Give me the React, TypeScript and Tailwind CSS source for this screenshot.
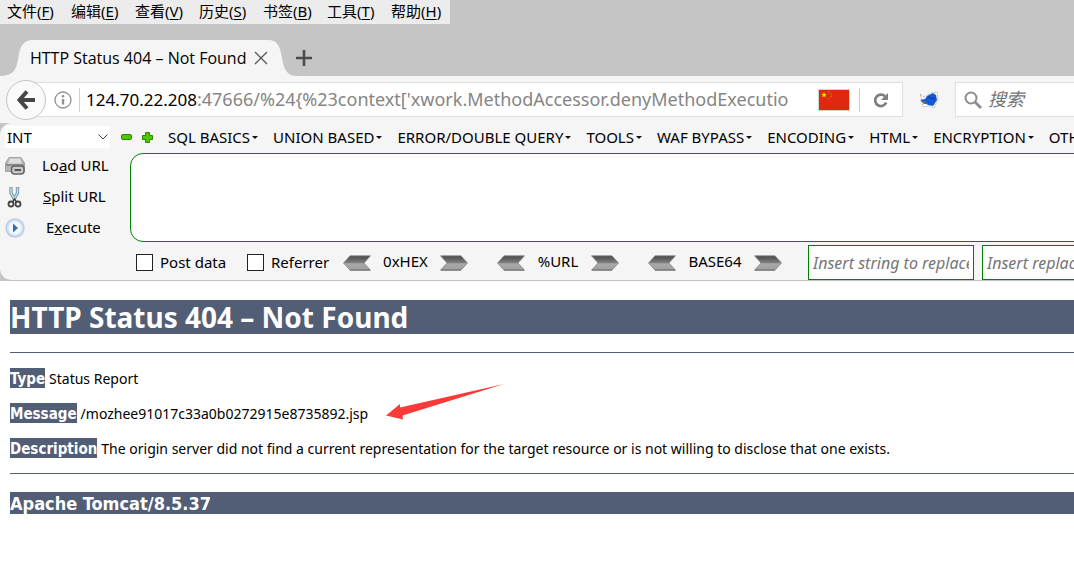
import React from "react";

const menus: [string, string][] = [
  ["文件", "F"],
  ["编辑", "E"],
  ["查看", "V"],
  ["历史", "S"],
  ["书签", "B"],
  ["工具", "T"],
  ["帮助", "H"],
];

const hackMenus = [
  "SQL BASICS",
  "UNION BASED",
  "ERROR/DOUBLE QUERY",
  "TOOLS",
  "WAF BYPASS",
  "ENCODING",
  "HTML",
  "ENCRYPTION",
  "OTHER",
];

function MenuBar() {
  return (
    <nav className="flex h-6 w-[450px] items-center bg-[#ececec] pb-px pl-[7px] text-[15px]">
      {menus.map(([label, key]) => (
        <button key={key} type="button" className="w-16 shrink-0 text-left whitespace-nowrap">
          {label}(<u className="underline-offset-2">{key}</u>)
        </button>
      ))}
    </nav>
  );
}

function TabStrip() {
  return (
    <div className="flex h-[52px] items-end">
      <svg className="h-9 w-[34px] shrink-0" viewBox="0 0 34 36" aria-hidden="true">
        <path d="M0 36C12 36 16 31 18 20C20 7 22 0 34 0V36Z" fill="#f5f5f5" />
      </svg>
      <div className="-ml-1 flex h-9 w-[238px] shrink-0 items-center justify-between bg-[#f5f5f5]">
        <span className="font-['Open_Sans',sans-serif] text-[16px] whitespace-nowrap">HTTP Status 404 – Not Found</span>
        <button type="button" aria-label="Close tab">
          <svg width="14" height="14" viewBox="0 0 14 14" stroke="#555" strokeWidth="1.3">
            <path d="M1 1L13 13M13 1L1 13" />
          </svg>
        </button>
      </div>
      <svg className="h-9 w-[30px] shrink-0" viewBox="0 0 30 36" aria-hidden="true">
        <path d="M0 0C10 0 12 7 14 18C16 30 19 36 30 36H0Z" fill="#f5f5f5" />
      </svg>
      <button type="button" aria-label="New tab" className="mb-2.5 -ml-1 h-4 w-5">
        <svg className="mx-auto" width="16" height="16" viewBox="0 0 16 16" stroke="#4c4c4c" strokeWidth="2.6">
          <path d="M8 0V16M0 8H16" />
        </svg>
      </button>
    </div>
  );
}

function Flag() {
  return (
    <svg className="shrink-0" width="32" height="22" viewBox="0 0 32 22" aria-hidden="true">
      <rect x=".5" y=".5" width="31" height="21" fill="#de2910" stroke="#d9cfcf" />
      <path d="M6 3l.8 2 2 .1-1.600 1.300.6 2.100L6 7.300l-1.800 1.200.6-2.100L3.200 5.100l2-.1z" fill="#ffde00" />
      <g fill="#e0701a">
        <circle cx="10.500" cy="3" r=".8" />
        <circle cx="13" cy="5" r=".8" />
        <circle cx="13" cy="7.500" r=".8" />
        <circle cx="10.500" cy="9.500" r=".8" />
      </g>
    </svg>
  );
}

function NavBar() {
  return (
    <div className="flex h-[47px] items-center bg-[#f5f5f5] pl-[6px]">
      <button
        type="button"
        aria-label="Back"
        className="z-10 flex size-10 shrink-0 items-center justify-center rounded-full border border-[#c4c4c4] bg-[#fafafa]"
      >
        <svg width="20" height="20" viewBox="0 0 20 20" fill="none" stroke="#454545" strokeWidth="4">
          <path d="M11 1.500L3.500 10L11 18.500M4 10H19" />
        </svg>
      </button>
      <div className="-ml-5 flex h-[35px] min-w-0 flex-1 items-center border border-[#dfdfdf] bg-white pl-[27px]">
        <svg className="shrink-0" width="18" height="18" viewBox="0 0 18 18" fill="none" stroke="#919191" aria-hidden="true">
          <circle cx="9" cy="9" r="8" strokeWidth="1.300" />
          <path d="M9 8V13.500" strokeWidth="2.400" />
          <circle cx="9" cy="5.200" r="1.300" fill="#919191" stroke="none" />
        </svg>
        <span className="ml-[7px] h-6 w-px shrink-0 bg-[#d0d0d0]" />
        <div className="ml-[6px] min-w-0 flex-1 overflow-hidden text-[18px] whitespace-nowrap text-[#858585]">
          <span className="text-[17px] text-black">124.70.22.208</span>
          :47666/%24&#123;%23context['xwork.MethodAccessor.denyMethodExecution
        </div>
        <span className="ml-[30px] flex">
          <Flag />
        </span>
        <span className="ml-[9px] h-6 w-px shrink-0 bg-[#d0d0d0]" />
        <button type="button" aria-label="Reload" className="mr-[13px] ml-[13px]">
          <svg width="16" height="16" viewBox="0 0 16 16" fill="none" aria-hidden="true">
            <path d="M12 4.300A5.700 5.700 0 1 0 13.200 10.500" stroke="#7e7e7e" strokeWidth="2.700" />
            <path d="M15 1V8H8Z" fill="#7e7e7e" />
          </svg>
        </button>
      </div>
      <button type="button" aria-label="Add-on" className="mx-4 shrink-0">
        <svg width="20" height="18" viewBox="0 0 20 18" aria-hidden="true">
          <path d="M5 6L1 3L3 9L4 16L10 15L15 17L19 8L18 1L13 2Z" fill="#fdfdfd" stroke="#a5a5a5" strokeWidth=".8" strokeDasharray="2 1" />
          <path d="M8 5L14 2L17 4L18 9L14 15L9 14L4 11L1 9L6 8Z" fill="#1358d8" />
          <path d="M2 10L6 10L9 13L5 13Z" fill="#5f6878" />
          <path d="M9 5.500L13 8L17 6.500" stroke="#0a379a" fill="none" />
        </svg>
      </button>
      <label className="flex h-[35px] w-[119px] shrink-0 items-center border border-r-0 border-[#dfdfdf] bg-white pl-2">
        <svg className="shrink-0" width="18" height="18" viewBox="0 0 18 18" fill="none" stroke="#8d8d8d" aria-hidden="true">
          <circle cx="7" cy="7" r="5.500" strokeWidth="2" />
          <path d="M11 11L17 17" strokeWidth="2.800" />
        </svg>
        <input
          aria-label="搜索"
          placeholder="搜索"
          className="ml-[6px] w-full min-w-0 bg-transparent text-[18px] italic outline-none placeholder:text-[#757575]"
        />
      </label>
    </div>
  );
}

function LoadIcon() {
  return (
    <svg width="20" height="20" viewBox="0 0 20 20" aria-hidden="true">
      <path d="M4 1.500H16L19.500 7V15.500H.5V7Z" fill="#b4b4b4" stroke="#a2a2a2" />
      <path d="M5 2.500H15L17 7.500H3Z" fill="#dedede" />
      <path d="M1 8H19V10H1Z" fill="#8d8d8d" />
      <rect x="6.500" y="10" width="12.500" height="8" rx="3" fill="#c9c9c9" stroke="#666" strokeWidth="1.500" />
      <path d="M9.500 14H16" stroke="#555" strokeWidth="2" />
    </svg>
  );
}

function SplitIcon() {
  return (
    <svg width="20" height="22" viewBox="0 0 20 22" fill="none" aria-hidden="true">
      <path d="M6 1V7L10 14M12.500 1V7L8.500 14" stroke="#7c9aa8" strokeWidth="3.400" />
      <path d="M6 1.500V7L9.500 13M12.500 1.500V7L9 13" stroke="#c0dcea" strokeWidth="1.400" />
      <circle cx="6" cy="18" r="2.500" stroke="#444" strokeWidth="1.800" />
      <circle cx="13" cy="18" r="2.500" stroke="#444" strokeWidth="1.800" />
      <path d="M7.500 16L9.500 13L11.500 16" stroke="#444" strokeWidth="1.500" />
    </svg>
  );
}

function ExecuteIcon() {
  return (
    <svg width="20" height="20" viewBox="0 0 20 20" aria-hidden="true">
      <circle cx="10" cy="10" r="9" fill="#d3e2f4" stroke="#bccde4" strokeWidth="1.500" />
      <circle cx="10" cy="10" r="6.500" fill="#f4f9ff" />
      <path d="M8 5.500L13 10L8 14.500Z" fill="#2f6fc0" />
    </svg>
  );
}

function Arrow({ label, flip = false }: { label: string; flip?: boolean }) {
  return (
    <button type="button" aria-label={label} className={flip ? "shrink-0 -scale-x-100" : "shrink-0"}>
      <svg width="28" height="16" viewBox="0 0 28 16" aria-hidden="true">
        <defs>
          <linearGradient id="metal" x1="0" y1="0" x2="0" y2="1">
            <stop offset="0" stopColor="#484848" />
            <stop offset=".47" stopColor="#7d7d7d" />
            <stop offset=".55" stopColor="#a8a8a8" />
            <stop offset="1" stopColor="#a0a0a0" />
          </linearGradient>
        </defs>
        <path d="M.5 8L7 .8H27.500L21 8L27.500 15.200H7Z" fill="url(#metal)" stroke="#8a8a8a" strokeWidth=".8" />
        <path d="M7 15H27" stroke="#6d6d6d" />
      </svg>
    </button>
  );
}

function Codec({ name, className }: { name: string; className: string }) {
  return (
    <div className={`flex shrink-0 items-center justify-between ${className}`}>
      <Arrow label={`Decode ${name}`} />
      <span className="pb-0.5">{name}</span>
      <Arrow label={`Encode ${name}`} flip />
    </div>
  );
}

function HackBar() {
  return (
    <div className="bg-[#c5c5c5]">
      <div className="overflow-hidden rounded-l-xl border-b border-[#c0c0c0] bg-[#f5f5f5] text-[15px]">
        <div className="flex h-[30px] items-center pb-0.5">
          <div className="relative ml-[5px] h-[22px] w-[105px] shrink-0 bg-white">
            <select aria-label="Type" className="h-full w-full appearance-none pl-0.5 outline-none">
              <option>INT</option>
            </select>
            <svg className="pointer-events-none absolute top-2 right-0.5" width="10" height="6" viewBox="0 0 10 6" fill="none" stroke="#444">
              <path d="M.5 .5L5 5L9.500 .5" />
            </svg>
          </div>
          <button type="button" aria-label="Remove" className="ml-[11px] shrink-0">
            <svg width="11" height="6" viewBox="0 0 11 6">
              <rect x=".5" y=".5" width="10" height="5" rx="1.500" fill="#4cc800" stroke="#2c8400" />
            </svg>
          </button>
          <button type="button" aria-label="Add" className="mr-[15px] ml-[10px] shrink-0">
            <svg width="11" height="11" viewBox="0 0 11 11">
              <path d="M3.500 .5H7.500V3.500H10.500V7.500H7.500V10.500H3.500V7.500H.5V3.500H3.500Z" fill="#4cc800" stroke="#2c8400" />
            </svg>
          </button>
          <div className="flex gap-[15px]">
            {hackMenus.map((m) => (
              <button key={m} type="button" className="flex shrink-0 items-center whitespace-nowrap">
                {m}
                <svg className="ml-0.5" width="6" height="3" viewBox="0 0 6 3" aria-hidden="true">
                  <path d="M0 0H6L3 3Z" fill="#111" />
                </svg>
              </button>
            ))}
          </div>
        </div>
        <div className="flex">
          <div className="-mt-[3px] w-[130px] shrink-0 pl-[5px]">
            <button type="button" className="flex h-[31px] w-full items-center">
              <LoadIcon />
              <span className="ml-[17px]">Lo<u>a</u>d URL</span>
            </button>
            <button type="button" className="flex h-[31px] w-full items-center">
              <SplitIcon />
              <span className="ml-[18px]"><u>S</u>plit URL</span>
            </button>
            <button type="button" className="flex h-[31px] w-full items-center">
              <ExecuteIcon />
              <span className="ml-[21px]">E<u>x</u>ecute</span>
            </button>
          </div>
          <div className="min-w-0 flex-1">
            <textarea
              aria-label="URL"
              className="block h-[89px] w-[calc(100%+20px)] resize-none rounded-[13px] border border-[#008000] bg-white outline-none"
            />
            <div className="flex h-[38px] items-center pt-[3px] pl-[6px]">
              <label className="flex w-[111px] shrink-0 items-center gap-[7px] whitespace-nowrap">
                <input type="checkbox" className="size-[17px] appearance-none border border-[#222] bg-white" />
                Post data
              </label>
              <label className="flex w-24 shrink-0 items-center gap-[7px] whitespace-nowrap">
                <input type="checkbox" className="size-[17px] appearance-none border border-[#222] bg-white" />
                Referrer
              </label>
              <Codec name="0xHEX" className="w-[125px]" />
              <Codec name="%URL" className="ml-[29px] w-[122px]" />
              <Codec name="BASE64" className="ml-[29px] w-[134px]" />
              <input
                aria-label="Insert string to replace"
                placeholder="Insert string to replace"
                className="ml-[26px] h-[35px] w-[166px] shrink-0 border border-[#008000] bg-white px-1 text-[16px] italic outline-none placeholder:text-[#757575]"
              />
              <input
                aria-label="Insert replacing string"
                placeholder="Insert replacing string"
                className="ml-2 h-[35px] w-[166px] shrink-0 border border-[#008000] bg-white px-1 text-[16px] italic outline-none placeholder:text-[#757575]"
              />
            </div>
          </div>
        </div>
      </div>
    </div>
  );
}

function Row({ name, children }: { name: string; children: React.ReactNode }) {
  return (
    <p className="mb-[15px] flex h-5 items-center gap-1 whitespace-nowrap">
      <b className="h-5 bg-[#525d76] font-['DejaVu_Sans_Condensed',sans-serif] text-[15px] leading-[22px] text-white">{name}</b>
      <span>{children}</span>
    </p>
  );
}

function ErrorPage() {
  return (
    <main className="pt-[19px] pl-[10px] text-[14px]">
      <h1 className="h-[34px] bg-[#525d76] text-[28px] leading-[35px] font-bold whitespace-nowrap text-white">
        HTTP Status 404 – Not Found
      </h1>
      <hr className="mt-[18px] mb-[15px] border-[#525d76]" />
      <Row name="Type">Status Report</Row>
      <Row name="Message">
        <span className="flex items-center">
          /mozhee91017c33a0b0272915e8735892.jsp
          <svg className="-my-6 ml-[18px] h-[60px]" width="120" height="60" viewBox="0 0 120 60" aria-hidden="true">
            <path d="M0 32.500L14 21V24.500L118 1L16.500 32.500L17 36.500Z" fill="#fb3a38" />
          </svg>
        </span>
      </Row>
      <Row name="Description">
        The origin server did not find a current representation for the target resource or is not willing to disclose that one exists.
      </Row>
      <hr className="mb-[18px] border-[#525d76]" />
      <h3 className="h-[22px] bg-[#525d76] font-['DejaVu_Sans_Condensed',sans-serif] text-[18px] leading-[23px] font-bold text-white">
        Apache Tomcat/8.5.37
      </h3>
    </main>
  );
}

export default function App() {
  return (
    <div className="min-h-screen overflow-hidden bg-white font-['Noto_Sans','Noto_Sans_CJK_SC',sans-serif] text-black">
      <header className="bg-[#c5c5c5]">
        <MenuBar />
        <TabStrip />
        <NavBar />
        <HackBar />
      </header>
      <ErrorPage />
    </div>
  );
}
